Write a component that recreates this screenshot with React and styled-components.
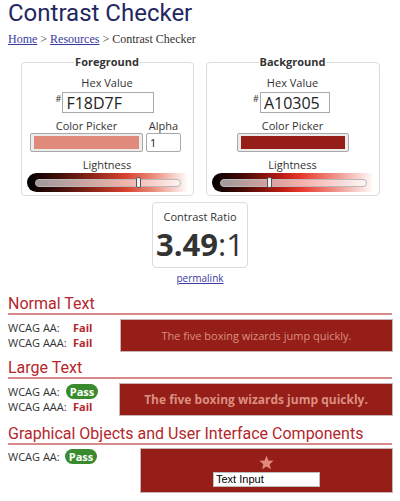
import styled, { createGlobalStyle } from "styled-components";

const GlobalStyle = createGlobalStyle`
  body {
    margin: 0;
    background: #fff;
    font-family: "Open Sans", "Liberation Sans", sans-serif;
    color: #333;
  }
`;

const Page = styled.div`
  padding: 0 8px;
  width: 384px;
`;

const Title = styled.h1`
  margin: 0;
  font-family: Roboto, "Liberation Sans", sans-serif;
  font-weight: 400;
  font-size: 24px;
  line-height: 26px;
  color: #24275f;
`;

const Crumbs = styled.div`
  margin-top: 6px;
  font-family: "Liberation Serif", serif;
  font-size: 12px;
  line-height: 14px;
  color: #333;

  a {
    color: #3a3aa0;
  }
`;

const Panels = styled.div`
  display: flex;
  justify-content: center;
  gap: 12px;
  margin-top: 11px;
`;

const Panel = styled.fieldset`
  width: ${(p) => p.$w}px;
  box-sizing: border-box;
  margin: 0;
  padding: 0 0 3px;
  border: 1px solid #dcdcdc;
  border-radius: 4px;
  display: flex;
  flex-direction: column;
  align-items: center;
`;

const Legend = styled.legend`
  margin: 0 auto;
  padding: 0 1px;
  font-weight: 700;
  font-size: 11px;
  line-height: 10px;
  color: #333;
`;

const Label = styled.div`
  font-size: 11px;
  line-height: 14px;
  color: #333;
  text-align: center;
`;

const HexLabel = styled(Label)`
  margin-top: 9px;
`;

const HexRow = styled.div`
  display: flex;
  align-items: flex-start;
  margin-top: 2px;
  margin-left: ${(p) => p.$shift}px;
`;

const Hash = styled.span`
  font-size: 9px;
  line-height: 10px;
  margin-top: 2px;
  margin-right: 1px;
`;

const HexInput = styled.input`
  width: ${(p) => p.$w}px;
  height: 21px;
  box-sizing: border-box;
  border: 1px solid #a9a9a9;
  padding: 0 3px;
  font-family: "Open Sans", sans-serif;
  font-size: 16px;
  color: #222;
  outline: none;
`;

const PickerGrid = styled.div`
  display: grid;
  grid-template-columns: ${(p) => p.$cols};
  column-gap: 3px;
  margin-top: 6px;
  margin-left: ${(p) => p.$shift}px;
`;

const Swatch = styled.div`
  height: 19px;
  box-sizing: border-box;
  border: 1px solid #a8a8a8;
  border-radius: 2px;
  background: #ececec;
  padding: 2px 3px;

  div {
    height: 100%;
    background: ${(p) => p.$color};
  }
`;

const AlphaInput = styled.input`
  width: 35px;
  height: 19px;
  box-sizing: border-box;
  border: 1px solid #a9a9a9;
  border-radius: 2px;
  padding: 0 3px;
  font-family: "Open Sans", sans-serif;
  font-size: 11px;
  color: #222;
`;

const LightLabel = styled(Label)`
  margin-top: 6px;
`;

const SliderBar = styled.div`
  width: ${(p) => p.$w}px;
  height: 19px;
  margin-top: 1px;
  border-radius: 10px 0 0 10px;
  background: ${(p) => p.$grad};
  display: flex;
  align-items: center;
  padding: 0 7px 0 8px;
  box-sizing: border-box;
`;

const Track = styled.div`
  flex: 1;
  height: 6px;
  border: 1px solid #b8b8b8;
  border-radius: 4px;
  background: rgba(255, 255, 255, 0.6);
  display: flex;
  align-items: center;
`;

const Thumb = styled.div`
  width: 5px;
  height: 11px;
  box-sizing: border-box;
  border: 1px solid #555;
  border-radius: 2px;
  background: #f4f4f4;
  margin-left: ${(p) => p.$pos}%;
`;

const RatioWrap = styled.div`
  display: flex;
  flex-direction: column;
  align-items: center;
  margin-top: 6px;
`;

const RatioBox = styled.div`
  width: 96px;
  height: 66px;
  box-sizing: border-box;
  border: 1px solid #dcdcdc;
  border-radius: 4px;
  text-align: center;
  padding-top: 7px;
`;

const Ratio = styled.div`
  font-size: 31px;
  line-height: 40px;
  color: #333;

  b {
    font-weight: 700;
  }
`;

const Permalink = styled.a`
  margin-top: 4px;
  font-size: 10px;
  line-height: 13px;
  color: #3a3aa0;
`;

const Section = styled.section`
  margin-top: ${(p) => p.$top}px;
`;

const Heading = styled.h2`
  margin: 0;
  font-family: Roboto, "Liberation Sans", sans-serif;
  font-weight: 400;
  font-size: 16px;
  line-height: 19px;
  color: #b3272d;
  border-bottom: 2px solid #d88a8a;
`;

const Body = styled.div`
  display: flex;
  margin-top: ${(p) => p.$gap ?? 4}px;
`;

const Results = styled.div`
  width: ${(p) => p.$w}px;
  flex-shrink: 0;
  padding-top: 1px;
`;

const Row = styled.div`
  display: flex;
  align-items: center;
  height: 15px;
  font-size: 11px;
  color: #333;
`;

const RowLabel = styled.span`
  width: ${(p) => p.$w}px;
`;

const Fail = styled.span`
  font-weight: 700;
  color: #b3272d;
`;

const Pass = styled.span`
  display: inline-block;
  width: 32px;
  height: 15px;
  line-height: 15px;
  border-radius: 8px;
  background: #3a8a2e;
  color: #fff;
  font-weight: 700;
  text-align: center;
`;

const Sample = styled.div`
  flex: 1;
  height: ${(p) => p.$h}px;
  margin-right: -1px;
  box-sizing: border-box;
  border: 1px solid #c9b3b3;
  background: #951e18;
  color: #dc8f80;
  font-size: ${(p) => (p.$large ? 12 : 11)}px;
  font-weight: ${(p) => (p.$large ? 700 : 400)};
  display: flex;
  flex-direction: column;
  align-items: center;
  justify-content: center;
`;

const TextInput = styled.input`
  width: 107px;
  height: 15px;
  box-sizing: border-box;
  margin-top: 2px;
  border: 1px solid #bdbdbd;
  padding: 0 2px;
  font-family: "Liberation Sans", Arial, sans-serif;
  font-size: 11px;
  color: #000;
`;

const Star = () => (
  <svg width="15" height="15" viewBox="0 0 24 24">
    <polygon
      fill="#e08a7c"
      points="12,1 15.1,8.6 23.3,9.3 17.1,14.7 19,22.8 12,18.5 5,22.8 6.9,14.7 0.7,9.3 8.9,8.6"
    />
  </svg>
);

const fgGrad =
  "linear-gradient(to right, #000 0%, #3a0d08 18%, #8a2418 40%, #d8442f 62%, #ec9485 80%, #fff 100%)";
const bgGrad =
  "linear-gradient(to right, #000 0%, #4a0a06 20%, #b81b14 42%, #e8382c 55%, #f09a92 78%, #fff 100%)";

export default function App() {
  return (
    <Page>
      <GlobalStyle />
      <Title>Contrast Checker</Title>
      <Crumbs>
        <a href="#">Home</a> &gt; <a href="#">Resources</a> &gt; Contrast Checker
      </Crumbs>

      <Panels>
        <Panel $w={173}>
          <Legend>Foreground</Legend>
          <HexLabel>Hex Value</HexLabel>
          <HexRow $shift={-4}>
            <Hash>#</Hash>
            <HexInput $w={92} defaultValue="F18D7F" />
          </HexRow>
          <PickerGrid $cols="113px 35px" $shift={-3}>
            <Label>Color Picker</Label>
            <Label>Alpha</Label>
            <Swatch $color="#e08a7c">
              <div />
            </Swatch>
            <AlphaInput defaultValue="1" />
          </PickerGrid>
          <LightLabel>Lightness</LightLabel>
          <SliderBar $w={161} $grad={fgGrad}>
            <Track>
              <Thumb $pos={70} />
            </Track>
          </SliderBar>
        </Panel>

        <Panel $w={174}>
          <Legend>Background</Legend>
          <HexLabel>Hex Value</HexLabel>
          <HexRow $shift={-2}>
            <Hash>#</Hash>
            <HexInput $w={70} defaultValue="A10305" />
          </HexRow>
          <PickerGrid $cols="112px" $shift={0}>
            <Label>Color Picker</Label>
            <Swatch $color="#951e18">
              <div />
            </Swatch>
          </PickerGrid>
          <LightLabel>Lightness</LightLabel>
          <SliderBar $w={162} $grad={bgGrad}>
            <Track>
              <Thumb $pos={32} />
            </Track>
          </SliderBar>
        </Panel>
      </Panels>

      <RatioWrap>
        <RatioBox>
          <Label>Contrast Ratio</Label>
          <Ratio>
            <b>3.49</b>:1
          </Ratio>
        </RatioBox>
        <Permalink href="#">permalink</Permalink>
      </RatioWrap>

      <Section $top={9}>
        <Heading>Normal Text</Heading>
        <Body>
          <Results $w={112}>
            <Row>
              <RowLabel $w={65}>WCAG AA:</RowLabel>
              <Fail>Fail</Fail>
            </Row>
            <Row>
              <RowLabel $w={65}>WCAG AAA:</RowLabel>
              <Fail>Fail</Fail>
            </Row>
          </Results>
          <Sample $h={33}>The five boxing wizards jump quickly.</Sample>
        </Body>
      </Section>

      <Section $top={6}>
        <Heading>Large Text</Heading>
        <Body>
          <Results $w={111}>
            <Row>
              <RowLabel $w={58}>WCAG AA:</RowLabel>
              <Pass>Pass</Pass>
            </Row>
            <Row>
              <RowLabel $w={65}>WCAG AAA:</RowLabel>
              <Fail>Fail</Fail>
            </Row>
          </Results>
          <Sample $h={33} $large>
            The five boxing wizards jump quickly.
          </Sample>
        </Body>
      </Section>

      <Section $top={8}>
        <Heading>Graphical Objects and User Interface Components</Heading>
        <Body $gap={3}>
          <Results $w={132}>
            <Row>
              <RowLabel $w={57}>WCAG AA:</RowLabel>
              <Pass>Pass</Pass>
            </Row>
          </Results>
          <Sample $h={45}>
            <Star />
            <TextInput defaultValue="Text Input" />
          </Sample>
        </Body>
      </Section>
    </Page>
  );
}
